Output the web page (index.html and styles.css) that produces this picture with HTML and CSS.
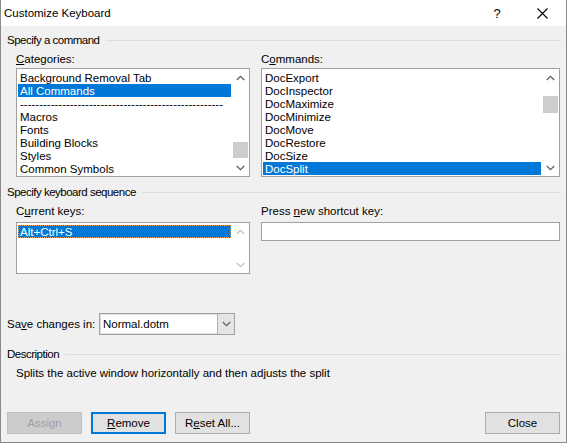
FILE: index.html
```html
<!DOCTYPE html>
<html>
<head>
<meta charset="utf-8">
<title>Customize Keyboard</title>
<link rel="stylesheet" href="styles.css">
</head>
<body>
<div class="window">
  <div class="titlebar">
    <span class="title">Customize Keyboard</span>
    <div class="tb-buttons">
      <span class="tb-btn help">?</span>
      <span class="tb-btn close">
        <svg width="11" height="11" viewBox="0 0 11 11"><path d="M0.5 0.5 L10.5 10.5 M10.5 0.5 L0.5 10.5" stroke="#000" stroke-width="1.1" fill="none"/></svg>
      </span>
    </div>
  </div>
  <div class="content">
    <div class="group-head first"><span>Specify a command</span><i class="rule"></i></div>
    <div class="cols labels">
      <span><u>C</u>ategories:</span>
      <span>C<u>o</u>mmands:</span>
    </div>
    <div class="cols lists">
      <div class="listbox big">
        <div class="items">
          <div class="row">Background Removal Tab</div>
          <div class="row sel">All Commands</div>
          <div class="row dashes">-----------------------------------------------------</div>
          <div class="row">Macros</div>
          <div class="row">Fonts</div>
          <div class="row">Building Blocks</div>
          <div class="row">Styles</div>
          <div class="row">Common Symbols</div>
        </div>
        <div class="vscroll">
          <span class="arrow"><svg width="9" height="6" viewBox="0 0 9 6"><path d="M0.8 5 L4.5 1.3 L8.2 5" stroke="#606060" stroke-width="1.3" fill="none"/></svg></span>
          <div class="track"><div class="thumb cat"></div></div>
          <span class="arrow"><svg width="9" height="6" viewBox="0 0 9 6"><path d="M0.8 1 L4.5 4.7 L8.2 1" stroke="#606060" stroke-width="1.3" fill="none"/></svg></span>
        </div>
      </div>
      <div class="listbox big">
        <div class="items">
          <div class="row">DocExport</div>
          <div class="row">DocInspector</div>
          <div class="row">DocMaximize</div>
          <div class="row">DocMinimize</div>
          <div class="row">DocMove</div>
          <div class="row">DocRestore</div>
          <div class="row">DocSize</div>
          <div class="row sel">DocSplit</div>
        </div>
        <div class="vscroll">
          <span class="arrow"><svg width="9" height="6" viewBox="0 0 9 6"><path d="M0.8 5 L4.5 1.3 L8.2 5" stroke="#606060" stroke-width="1.3" fill="none"/></svg></span>
          <div class="track"><div class="thumb cmd"></div></div>
          <span class="arrow"><svg width="9" height="6" viewBox="0 0 9 6"><path d="M0.8 1 L4.5 4.7 L8.2 1" stroke="#606060" stroke-width="1.3" fill="none"/></svg></span>
        </div>
      </div>
    </div>

    <div class="group-head second"><span>Specify keyboard sequence</span><i class="rule"></i></div>
    <div class="cols labels">
      <span>C<u>u</u>rrent keys:</span>
      <span>Press <u>n</u>ew shortcut key:</span>
    </div>
    <div class="cols keys">
      <div class="listbox small">
        <div class="items">
          <div class="row sel focus">Alt+Ctrl+S</div>
        </div>
        <div class="vscroll">
          <span class="arrow"><svg width="9" height="6" viewBox="0 0 9 6"><path d="M0.8 5 L4.5 1.3 L8.2 5" stroke="#bfbfbf" stroke-width="1.3" fill="none"/></svg></span>
          <div class="track"></div>
          <span class="arrow"><svg width="9" height="6" viewBox="0 0 9 6"><path d="M0.8 1 L4.5 4.7 L8.2 1" stroke="#bfbfbf" stroke-width="1.3" fill="none"/></svg></span>
        </div>
      </div>
      <div class="textbox"></div>
    </div>

    <div class="save-row">
      <span class="save-label">Sa<u>v</u>e changes in:</span>
      <div class="combo">
        <span class="combo-text">Normal.dotm</span>
        <span class="combo-btn"><svg width="9" height="6" viewBox="0 0 9 6"><path d="M0.8 1 L4.5 4.7 L8.2 1" stroke="#606060" stroke-width="1.2" fill="none"/></svg></span>
      </div>
    </div>

    <div class="group-head third"><span>Description</span><i class="rule"></i></div>
    <div class="desc">Splits the active window horizontally and then adjusts the split</div>

    <div class="buttons">
      <span class="btn disabled">Assign</span>
      <span class="btn default"><u>R</u>emove</span>
      <span class="btn">R<u>e</u>set All...</span>
      <span class="spacer"></span>
      <span class="btn">Close</span>
    </div>
  </div>
</div>
</body>
</html>
```
FILE: styles.css
```css
* { box-sizing: border-box; }
html, body { margin: 0; padding: 0; background: #f0f0f0; }
body {
  font-family: "Liberation Sans", Arial, sans-serif;
  font-size: 11.5px;
  color: #000;
}
u { text-decoration: underline; text-underline-offset: 1px; }

.window {
  width: 567px;
  height: 443px;
  border: 1px solid #8a8a8a;
  border-top: none;
  background: #f0f0f0;
  display: flex;
  flex-direction: column;
}

.titlebar {
  height: 26px;
  background: #fff;
  display: flex;
  align-items: center;
  flex: none;
}
.title {
  padding-left: 3px;
  line-height: 26px;
  flex: 1;
}
.tb-buttons { display: flex; height: 26px; }
.tb-btn {
  width: 46px;
  height: 26px;
  display: flex;
  align-items: center;
  justify-content: center;
}
.help { font-size: 13px; }
.close svg { display: block; margin-left: -1px; }

.content {
  flex: 1;
  padding: 6px 5px 0 5px;
  display: flex;
  flex-direction: column;
}

.group-head {
  height: 16px;
  display: flex;
  align-items: center;
  gap: 6px;
  line-height: 16px;
  padding-left: 1px;
}
.group-head span { letter-spacing: -0.5px; }
.group-head .rule {
  flex: 1;
  height: 1px;
  background: #dcdcdc;
  margin-top: 1px;
}
.group-head.second { margin-top: 7px; }
.group-head.third { margin-top: 11px; }

.cols {
  display: grid;
  grid-template-columns: 234px 299px;
  column-gap: 11px;
  margin-left: 10px;
}
.labels {
  height: 16px;
  line-height: 16px;
  margin-top: 3px;
}
.lists { margin-top: 1px; }
.keys { margin-top: 3px; align-items: start; }

.listbox {
  border: 1px solid #a0a0a0;
  background: #fff;
  display: flex;
}
.listbox.big { height: 109px; }
.listbox.small { height: 52px; }
.items {
  flex: 1;
  padding: 2px 1px 0 1px;
  overflow: hidden;
  min-width: 0;
}
.row {
  height: 13px;
  line-height: 15px;
  padding-left: 2px;
  white-space: nowrap;
}
.row.sel { background: #0078d7; color: #fff; }
.row.focus { outline: 1px dotted #f0a050; outline-offset: -1px; }
.row.dashes { width: 208px; overflow: hidden; }

.vscroll {
  width: 17px;
  flex: none;
  display: flex;
  flex-direction: column;
  background: #fff;
}
.arrow {
  height: 17px;
  flex: none;
  display: flex;
  align-items: center;
  justify-content: center;
}
.arrow svg { display: block; }
.track { flex: 1; display: flex; flex-direction: column; }
.thumb {
  margin: 0 1px;
  background: #cdcdcd;
}
.thumb.cat { margin-top: 56px; height: 16px; }
.thumb.cmd { margin-top: 10px; height: 17px; }

.textbox {
  height: 19px;
  border: 1px solid #a0a0a0;
  background: #fff;
}

.save-row {
  margin-top: 39px;
  height: 22px;
  display: flex;
  align-items: center;
  padding-left: 1px;
}
.save-label { width: 92px; }
.combo {
  width: 136px;
  height: 22px;
  border: 1px solid #a0a0a0;
  background: #fff;
  display: flex;
  align-items: stretch;
  box-shadow: inset 0 0 0 1px #e0e0e0;
}
.combo-text {
  flex: 1;
  padding-left: 3px;
  line-height: 20px;
}
.combo-btn {
  width: 17px;
  background: #e5e5e5;
  border-left: 1px solid #b0b0b0;
  display: flex;
  align-items: center;
  justify-content: center;
}

.desc {
  margin-top: 3px;
  height: 16px;
  line-height: 16px;
  padding-left: 10px;
}

.buttons {
  margin-top: 31px;
  display: flex;
  gap: 9px;
  padding: 0 1px;
}
.spacer { flex: 1; }
.btn {
  width: 75px;
  height: 22px;
  border: 1px solid #adadad;
  background: #e1e1e1;
  display: flex;
  align-items: center;
  justify-content: center;
  line-height: 20px;
}
.btn.default { border: 2px solid #0078d7; }
.btn.disabled { background: #cccccc; border-color: #bfbfbf; color: #a0a0a0; }
```
